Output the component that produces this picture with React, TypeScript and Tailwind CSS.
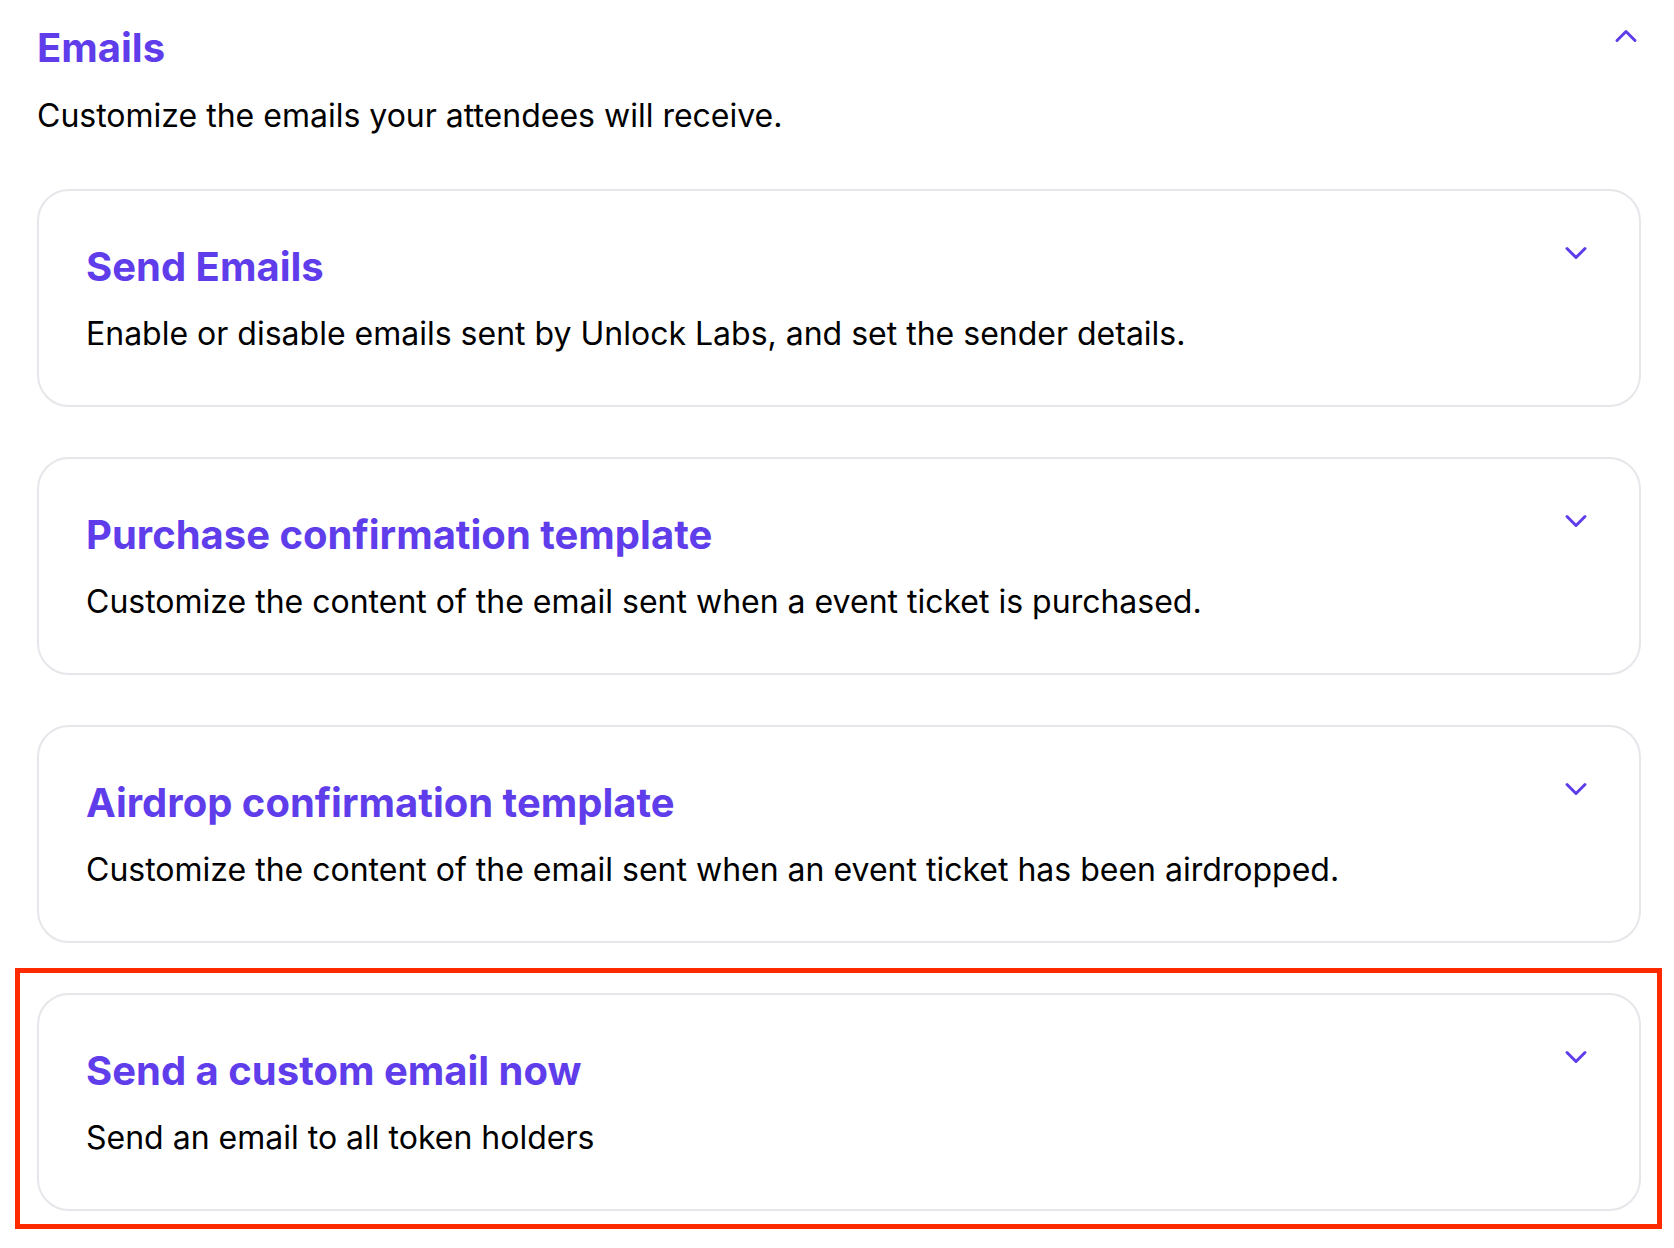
import { ChevronDown, ChevronUp } from 'lucide-react';

interface Section {
    title: string;
    description: string;
    highlighted?: boolean;
}

const SECTIONS: Section[] = [
    {
        title: 'Send Emails',
        description: 'Enable or disable emails sent by Unlock Labs, and set the sender details.',
    },
    {
        title: 'Purchase confirmation template',
        description: 'Customize the content of the email sent when a event ticket is purchased.',
    },
    {
        title: 'Airdrop confirmation template',
        description: 'Customize the content of the email sent when an event ticket has been airdropped.',
    },
    {
        title: 'Send a custom email now',
        description: 'Send an email to all token holders',
        highlighted: true,
    },
];

function SectionCard({ section }: { section: Section }) {
    return (
        <div className="relative">
            <div className="flex items-start justify-between rounded-[32px] border-2 border-[#E6E6EB] bg-white pl-[47px] pr-[45px] pt-[48px] pb-[51px]">
                <div className="flex flex-col gap-[19px]">
                    <h3 className="text-[40px] leading-[56px] font-bold text-[#603DEB]">{section.title}</h3>
                    <p className="text-[32px] leading-[40px] text-black">{section.description}</p>
                </div>
                <button className="-mt-[4px] shrink-0">
                    <ChevronDown size={36} strokeWidth={2} className="text-[#603DEB]" />
                </button>
            </div>
            {/* red highlight around the last card */}
            {section.highlighted && (
                <div className="pointer-events-none absolute -top-[25px] -left-[22px] -right-[21px] -bottom-[18px] border-[5px] border-[#FF2A00]" />
            )}
        </div>
    );
}

export default function App() {
    return (
        <div className="min-h-screen bg-white font-['Inter',sans-serif] text-black antialiased">
            <div className="pl-[37px] pr-[33px] pt-[20px]">
                {/* Header */}
                <div className="flex items-start justify-between">
                    <h2 className="text-[40px] leading-[56px] font-bold text-[#603DEB]">Emails</h2>
                    <button className="-mt-[2px] -mr-[3px]">
                        <ChevronUp size={36} strokeWidth={2} className="text-[#603DEB]" />
                    </button>
                </div>
                <p className="mt-[20px] text-[32px] leading-[40px]">Customize the emails your attendees will receive.</p>

                {/* Sections */}
                <div className="mt-[53px] flex flex-col gap-[50px]">
                    {SECTIONS.map((section) => (
                        <SectionCard key={section.title} section={section} />
                    ))}
                </div>
            </div>
        </div>
    );
}
